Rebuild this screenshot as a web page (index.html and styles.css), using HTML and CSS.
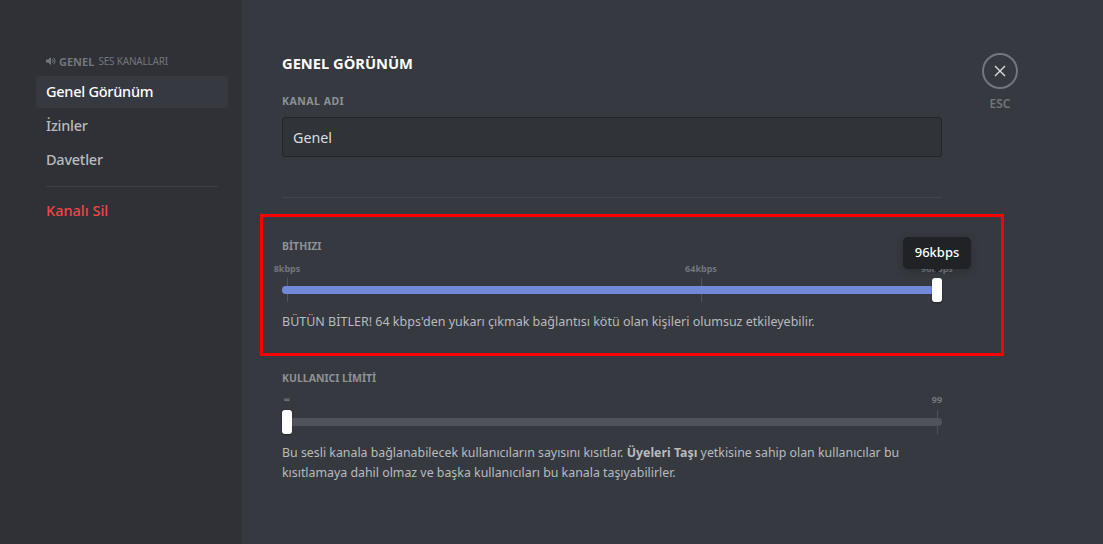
FILE: index.html
```html
<!DOCTYPE html>
<html lang="tr">
<head>
<meta charset="utf-8">
<title>Kanal Ayarları</title>
<link rel="stylesheet" href="styles.css">
</head>
<body>
<div class="app">
  <aside class="sidebar">
    <div class="side-head">
      <svg class="speaker" viewBox="0 0 10 10" width="10" height="10"><path d="M0 3.4h2L5 1v8L2 6.6H0z" fill="#72767d"/><path d="M6.2 3a2.6 2.6 0 0 1 0 4M7.6 1.8a4.4 4.4 0 0 1 0 6.4" fill="none" stroke="#72767d" stroke-width="1"/></svg>
      <span class="side-name">GENEL</span>
      <span class="side-sub">SES KANALLARI</span>
    </div>
    <nav class="nav">
      <div class="nav-item selected">Genel Görünüm</div>
      <div class="nav-item">İzinler</div>
      <div class="nav-item">Davetler</div>
      <div class="nav-sep"></div>
      <div class="nav-item danger">Kanalı Sil</div>
    </nav>
  </aside>
  <main class="main">
    <div class="content">
      <h1 class="title">GENEL GÖRÜNÜM</h1>
      <label class="label name-label">KANAL ADI</label>
      <div class="input">Genel</div>
      <div class="divider"></div>

      <section class="bitrate">
        <h2 class="label">BİTHIZI</h2>
        <div class="slider">
          <span class="mark" style="left:5px"><b class="mark-text">8kbps</b></span>
          <span class="mark" style="left:419px"><b class="mark-text">64kbps</b></span>
          <span class="mark" style="left:655px"><b class="mark-text">96kbps</b></span>
          <div class="track"><div class="fill"></div></div>
          <span class="thumb thumb-end"></span>
          <div class="tooltip">96kbps</div>
        </div>
        <p class="note">BÜTÜN BİTLER! 64 kbps'den yukarı çıkmak bağlantısı kötü olan kişileri olumsuz etkileyebilir.</p>
      </section>

      <section class="limit">
        <h2 class="label">KULLANICI LİMİTİ</h2>
        <div class="slider">
          <span class="mark" style="left:5px"><b class="mark-text">∞</b></span>
          <span class="mark" style="left:655px"><b class="mark-text">99</b></span>
          <div class="track"></div>
          <span class="thumb thumb-start"></span>
        </div>
        <p class="note">Bu sesli kanala bağlanabilecek kullanıcıların sayısını kısıtlar. <strong>Üyeleri Taşı</strong> yetkisine sahip olan kullanıcılar bu kısıtlamaya dahil olmaz ve başka kullanıcıları bu kanala taşıyabilirler.</p>
      </section>
    </div>
    <div class="tools">
      <div class="close">
        <svg viewBox="0 0 12 12" width="12" height="12"><path d="M1 1l10 10M11 1L1 11" stroke="#dcddde" stroke-width="1.4" fill="none"/></svg>
      </div>
      <div class="esc">ESC</div>
    </div>
  </main>
</div>
<div class="highlight"></div>
</body>
</html>
```
FILE: styles.css
```css
* { box-sizing: border-box; }
html, body { margin: 0; height: 100%; }
body {
  background: #36393f;
  font-family: "Noto Sans", "Open Sans", sans-serif;
  color: #b9bbbe;
  overflow: hidden;
}
.app { display: flex; height: 544px; }
.sidebar {
  width: 242px;
  flex: none;
  background: #2f3136;
  padding: 54px 14px 0 36px;
}
.side-head {
  display: flex;
  align-items: center;
  height: 14px;
  padding-left: 10px;
  margin-bottom: 8px;
  color: #72767d;
  white-space: nowrap;
}
.speaker { margin-right: 3px; }
.side-name { font-size: 11px; font-weight: 700; margin-right: 4px; }
.side-sub { font-size: 10px; letter-spacing: -0.2px; }
.nav-item {
  height: 32px;
  line-height: 31px;
  margin-bottom: 2px;
  padding-left: 10px;
  border-radius: 3px;
  font-size: 14.5px;
  letter-spacing: -0.25px;
  font-weight: 500;
  color: #b9bbbe;
}
.nav-item.selected { background: #36393f; color: #fff; }
.nav-item.danger { color: #f04747; letter-spacing: 0; }
.nav-sep { height: 1px; margin: 10px 10px 8px; background: #3c3f45; }
.main { flex: 1; display: flex; padding: 53px 0 0 40px; }
.content { width: 660px; flex: none; }
.title {
  margin: 1px 0 22px;
  font-size: 14.7px;
  line-height: 18px;
  font-weight: 700;
  color: #fff;
}
.label {
  margin: 0;
  display: block;
  font-size: 10.5px;
  line-height: 14px;
  font-weight: 700;
  color: #8e9297;
}
.name-label { margin-bottom: 9px; letter-spacing: 0.5px; }
.input {
  height: 40px;
  line-height: 39px;
  padding-left: 10px;
  background: #303338;
  border: 1px solid #222428;
  border-radius: 3px;
  font-size: 14.3px;
  color: #dcddde;
}
.divider { height: 1px; margin-top: 40px; background: #42454b; }
.bitrate { margin-top: 41px; }
.limit { margin-top: 39px; }
.bitrate .slider { margin-top: 25px; }
.limit .slider { margin-top: 25px; }
.slider { position: relative; height: 24px; }
.track {
  position: absolute;
  left: 0; right: 0; top: 8px;
  height: 8px;
  border-radius: 4px;
  background: #4f545c;
}
.fill { height: 100%; border-radius: 4px; background: #7289da; }
.mark {
  position: absolute;
  top: 0;
  width: 1px;
  height: 24px;
  background: #4f545c;
}
.mark-text {
  position: absolute;
  bottom: 27px;
  left: 0;
  transform: translateX(-50%);
  font-size: 9px;
  line-height: 12px;
  font-weight: 700;
  color: #72767d;
  white-space: nowrap;
}
.limit .mark-text { bottom: 28px; }
.thumb {
  position: absolute;
  top: 0;
  width: 10px;
  height: 24px;
  border-radius: 3px;
  background: #fff;
  box-shadow: 0 1px 2px rgba(0,0,0,.35);
}
.thumb-end { left: 650px; }
.thumb-start { left: 0; }
.tooltip {
  position: absolute;
  left: 621px;
  top: -41px;
  width: 68px;
  height: 32px;
  line-height: 31px;
  text-align: center;
  border-radius: 5px;
  background: #202225;
  color: #fff;
  font-size: 13px;
  font-weight: 500;
  box-shadow: 0 2px 8px rgba(0,0,0,.2);
}
.tooltip::after {
  content: "";
  position: absolute;
  left: 50%;
  bottom: -4px;
  margin-left: -4px;
  border: 4px solid transparent;
  border-bottom: 0;
  border-top-color: #202225;
}
.note {
  margin: 10px 0 0;
  font-size: 12.5px;
  line-height: 20px;
  color: #b9bbbe;
}
.limit .note { margin-top: 9px; font-size: 12.36px; }
.note strong { font-weight: 700; }
.tools { margin-left: 40px; width: 36px; }
.close {
  width: 36px;
  height: 36px;
  display: flex;
  align-items: center;
  justify-content: center;
  border: 2px solid #72767d;
  border-radius: 50%;
}
.esc {
  margin-top: 8px;
  text-align: center;
  font-size: 12px;
  line-height: 14px;
  font-weight: 600;
  color: #72767d;
}
.highlight {
  position: absolute;
  left: 260px;
  top: 214px;
  width: 744px;
  height: 142px;
  border: 3px solid #f00;
}
```
